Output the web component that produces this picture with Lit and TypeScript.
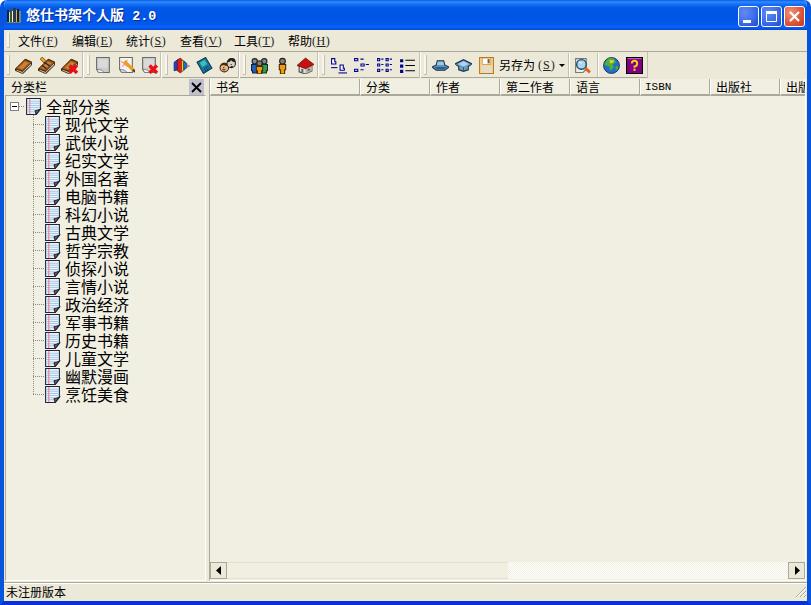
import { LitElement, html, css, svg } from 'lit';
import { customElement } from 'lit/decorators.js';

const redX = svg`<path d="M8 8l7 7M15 8l-7 7" stroke="#e8101a" stroke-width="3.200" fill="none"/>`;
const book = svg`
  <path d="M0 11 9 2q1-.5 2 0l5 2.500v3L8 15.500q-1 .5-2 0l-6-2.500z" fill="#4c2a0c"/>
  <path d="M1.200 10.800 9.300 3l5.700 2.200L7 12.800z" fill="#a8601c"/>
  <path d="M3.500 10 9.300 4.500l3.500 1.200L7 11.500z" fill="#c98236"/>
  <path d="M1.500 12l5.500 2.200 8-8v1.300l-8 7.500-5.500-2.200z" fill="#d8d8d0"/>`;
const page = svg`
  <path d="M1.500 .500h12v14h-10l-2-3z" fill="#c9cdca" stroke="#6a6a6a"/>
  <path d="M3 2h9v8H3z" fill="#d8dbd9"/>
  <path d="M1.500 11.500l5 1 2 2h-5z" fill="#fff" stroke="#6a6a6a" stroke-width=".7"/>`;
const hat = svg`
  <path d="M0 9.500l4-2 1-4h6l1 4 4 2-4 3H4z" fill="#5f94c0" stroke="#16304a"/>
  <path d="M5.500 4.500h5l1 3h-7z" fill="#a0c8e4"/>
  <path d="M2 9.500h12l-3 2H5z" fill="#2f5c84"/>`;

const ICONS: Record<string, unknown> = {
  book,
  bookEdit: svg`${book}
    <path d="M4 0l3.500 3.500-2 2L2 2z" fill="#f0a020" stroke="#704000" stroke-width=".7"/>
    <path d="M6 5l5 3.500M4 8l4 3" stroke="#222" stroke-width="1.200"/>`,
  bookDel: svg`${book}${redX}`,
  page,
  pageEdit: svg`
    <path d="M1.500 .500h12v14h-10l-2-3z" fill="#f6f2f0" stroke="#6a6a6a"/>
    <path d="M3 4l6 5M9 3L4 9" stroke="#f09090"/>
    <path d="M1.500 11.500l5 1 2 2h-5z" fill="#ddd" stroke="#6a6a6a" stroke-width=".7"/>
    <path d="M6 4l9 9" stroke="#e8a020" stroke-width="3"/>
    <path d="M14 12l2 2" stroke="#444" stroke-width="2"/>`,
  pageDel: svg`${page}${redX}`,
  colors: svg`
    <path d="M1 5l4-3v10l-4 1z" fill="#2048c8" stroke="#101848" stroke-width=".6"/>
    <path d="M4 3l3-2 2 2v10l-2 2-3-2z" fill="#e81818" stroke="#501010" stroke-width=".6"/>
    <path d="M8 3l3 1v8l-3 2z" fill="#f0d020" stroke="#504010" stroke-width=".6"/>
    <path d="M10 4l3 2v4l-3 2z" fill="#2070d8" stroke="#101848" stroke-width=".6"/>
    <path d="M13 7l3 1v1l-3 1z" fill="#999"/>`,
  pda: svg`
    <path d="M1 5l8-4.500 6 10-8 5z" fill="#1878a8" stroke="#0c3850"/>
    <path d="M3.500 5.500l4.500-3 2.500 4-4.500 3z" fill="#40c0a8"/>
    <path d="M7.500 11.500l4-2.500M8.500 13l4-2.500" stroke="#083048" stroke-dasharray="1 1"/>`,
  faces: svg`
    <circle cx="5" cy="10" r="4" fill="#e8b888" stroke="#402010"/>
    <path d="M1.500 8.500q1-4 4-3t3 3q-3 0-4-1z" fill="#4a2c14"/>
    <circle cx="11.500" cy="6" r="4" fill="#d8d0c4" stroke="#202020"/>
    <path d="M8 5q0-4 4-4t3.500 4q-3 0-4-2-1 2-3.500 2z" fill="#202020"/>
    <path d="M4 10h1M11 7h1M3 12h3M11 9h2" stroke="#402010"/>`,
  people: svg`
    <circle cx="3.500" cy="4" r="2.500" fill="#7a8ca0" stroke="#222"/>
    <path d="M0.500 7h6v6h-1v2h-4v-2h-1z" fill="#2060c0" stroke="#102040"/>
    <circle cx="12.500" cy="4" r="2.500" fill="#7a8ca0" stroke="#222"/>
    <path d="M9.500 7h6v6h-1v2h-4v-2h-1z" fill="#30a050" stroke="#103020"/>
    <circle cx="8" cy="6" r="2.500" fill="#8a8070" stroke="#222"/>
    <path d="M5 9h6v4l-1 0v3H6v-3l-1 0z" fill="#f09a10" stroke="#402800"/>`,
  person: svg`
    <circle cx="8" cy="4" r="2.700" fill="#8a8070" stroke="#222"/>
    <path d="M5 7h6v5h-1v4H6v-4H5z" fill="#f09a10" stroke="#402800"/>`,
  house: svg`
    <path d="M2 9v5l6 2 6-3V8L8 5z" fill="#e8e4dc" stroke="#444"/>
    <path d="M8 11v5l6-3V8z" fill="#b8b4ac"/>
    <path d="M0 8l8-7 8 6-8 4z" fill="#c81010" stroke="#601010" stroke-width=".7"/>
    <path d="M4 11h2v3H4zM10 11h2v2h-2z" fill="#666"/>`,
  large: svg`
    <path d="M1.500 1.500h3v3h1v2h-4z" fill="#fff" stroke="#000090"/>
    <path d="M1 10h6" stroke="#000090"/>
    <path d="M9.500 7.500h3v3h1v2h-4z" fill="#fff" stroke="#000090"/>
    <path d="M8 15h8" stroke="#000090"/>`,
  small: svg`
    <path d="M1.500 1.500h3v2h-3zM7 2h3M7.500 6.500h3v2h-3zM12 7h3M1.500 11.500h3v2h-3zM7 12h3" fill="#fff" stroke="#000090"/>`,
  list: svg`
    <path d="M1.500 1.500h2v2h-2zM5 2h2M9.500 1.500h2v2h-2zM13 2h2M1.500 6.500h2v2h-2zM5 7h2M9.500 6.500h2v2h-2zM13 7h2M1.500 11.500h2v2h-2zM5 12h2M9.500 11.500h2v2h-2zM13 12h2" fill="#fff" stroke="#000090"/>`,
  details: svg`
    <path d="M1 2h3v3H1zM1 7h3v3H1zM1 12h3v3H1z" fill="#000090"/>
    <path d="M6 3h9M6 8h9M6 13h9" stroke="#000"/>`,
  hat,
  hatUp: svg`<g transform="translate(0 -1)">
    <path d="M0 7.500l8-4 8 4-3.500 2.500v3L8 14.500 3.500 13v-3z" fill="#6a9cc4" stroke="#16304a"/>
    <path d="M3 7.500l5-2.500 5 2.500-5 2.500z" fill="#b0d4ec"/>
    <path d="M8 10.500v4" stroke="#2f5c84"/></g>`,
  save: svg`
    <path d="M1.500 .500h13v15h-13z" fill="#f8d898" stroke="#b87818"/>
    <path d="M4 1h8v6H4z" fill="#fff" stroke="#b87818" stroke-width=".6"/>
    <path d="M9 2h2v4H9z" fill="#806030"/>
    <path d="M3.500 9h9v6h-9z" fill="#e0dcd0"/>`,
  find: svg`
    <path d="M1.500 1.500h10v10l-3 3h-7z" fill="#ecece8" stroke="#777"/>
    <circle cx="7" cy="7" r="4.500" fill="#a8d8f0" stroke="#204868" stroke-width="1.300"/>
    <path d="M5 5l2 1" stroke="#fff"/>
    <path d="M10.500 10.500l4.500 4" stroke="#e86020" stroke-width="2.600"/>`,
  globe: svg`
    <circle cx="8" cy="8" r="7.500" fill="#2070c8" stroke="#102858" stroke-width=".8"/>
    <path d="M4 2q4-2 7 0l1 3-3 2 1 3-3 3-1-4-3-1-2-1z" fill="#50b030"/>
    <path d="M6 3l4 0 0 2-3 1z" fill="#e8d040"/>
    <path d="M12 9l2-1 0 3-2 2z" fill="#50b030"/>`,
  help: svg`
    <path d="M.5.500h15v15H.5z" fill="#800080" stroke="#000"/>
    <path d="M1.500 1.500h13" stroke="#c060c0"/>
    <path d="M5.500 6q0-2.500 2.500-2.500T10.500 6 8 9v1" fill="none" stroke="#f0d020" stroke-width="1.800"/>
    <path d="M7 11h2v2H7z" fill="#f0d020"/>`,
  note: svg`
    <path d="M1.500 .500h13v10l-4 5h-9z" fill="#eaf2f8" stroke="#24243a"/>
    <path d="M2 3h12M2 5h12M2 7h12M2 9h12M2 11h9M2 13h8" stroke="#a4cbea"/>
    <path d="M4.500 1v14" stroke="#f07a8a"/>
    <path d="M14.500 10.500l-5 1.500 1 3.500z" fill="#666" stroke="#24243a"/>`,
  shelf: svg`
    <path d="M1 3h2v12H1z" fill="#1c2430"/>
    <path d="M3 5h1v10H3z" fill="#d8d8b8"/>
    <path d="M4 2h2v13H4z" fill="#2a5a38"/>
    <path d="M6 4h1v11H6z" fill="#f0f0e8"/>
    <path d="M7 1h3v14H7z" fill="#303848"/>
    <path d="M10 3h1v12h-1z" fill="#c8b870"/>
    <path d="M11 2h2v13h-2z" fill="#1c2028"/>
    <path d="M13 4h2v11h-2z" fill="#7a8a70"/>
    <path d="M1 15h14v1H1z" fill="#8a7a50"/>`,
};

const icon = (name: string, size = 17) =>
  html`<svg class="ic" width=${size} height=${size} viewBox="0 0 16 16">${ICONS[name]}</svg>`;

const BANDS = [
  { width: 80, icons: ['book', 'bookEdit', 'bookDel'] },
  { width: 78, icons: ['page', 'pageEdit', 'pageDel'] },
  { width: 78, icons: ['colors', 'pda', 'faces'] },
  { width: 79, icons: ['people', 'person', 'house'] },
  { width: 102, icons: ['large', 'small', 'list', 'details'] },
];

const MENUS = [
  ['文件', 'F'],
  ['编辑', 'E'],
  ['统计', 'S'],
  ['查看', 'V'],
  ['工具', 'T'],
  ['帮助', 'H'],
];

const CATEGORIES = [
  '现代文学', '武侠小说', '纪实文学', '外国名著', '电脑书籍', '科幻小说', '古典文学', '哲学宗教',
  '侦探小说', '言情小说', '政治经济', '军事书籍', '历史书籍', '儿童文学', '幽默漫画', '烹饪美食',
];

const COLUMNS = [
  { label: '书名', width: 150 },
  { label: '分类', width: 70 },
  { label: '作者', width: 70 },
  { label: '第二作者', width: 70 },
  { label: '语言', width: 70 },
  { label: 'ISBN', width: 70 },
  { label: '出版社', width: 70 },
  { label: '出版日期', width: 70 },
];

@customElement('app-root')
export class AppRoot extends LitElement {
  static styles = css`
    :host {
      display: block;
      width: 811px;
      height: 605px;
      overflow: hidden;
      background: #fff;
      font-family: 'Noto Sans CJK SC', 'Liberation Sans', sans-serif;
      font-size: 12px;
      line-height: 16px;
      color: #000;
    }
    .ic { display: block; flex: none; }
    .window {
      height: 605px;
      box-sizing: border-box;
      display: flex;
      flex-direction: column;
      border-radius: 7px 7px 0 0;
      overflow: hidden;
      border-left: 4px solid #0855dd;
      border-right: 4px solid #0855dd;
      border-bottom: 4px solid #0831d9;
    }
    .titlebar {
      flex: none;
      height: 30px;
      margin: 0 -4px;
      display: flex;
      align-items: center;
      padding: 0 6px 0 6px;
      background: linear-gradient(180deg, #0a5be6 0, #2f8cff 2px, #1a70f4 4px, #0058e8 8px, #0055e5 16px, #0058ee 24px, #0a62f4 27px, #0048d8 30px);
    }
    .title {
      margin-left: 4px;
      flex: 1;
      color: #fff;
      font-size: 14px;
      font-weight: 700;
      white-space: pre;
      text-shadow: 1px 1px 0 #0a2a90;
    }
    .title b {
      margin-left: 5px;
      font-family: 'Liberation Mono', monospace;
      font-size: 13.4px;
    }
    .winbtns { display: flex; gap: 2px; margin-top: 3px; }
    .winbtn {
      width: 21px;
      height: 21px;
      box-sizing: border-box;
      border: 1px solid #fff;
      border-radius: 3px;
      background: radial-gradient(circle at 30% 30%, #5f8cf0 0, #3c6cea 55%, #2248c0 100%);
      display: flex;
      align-items: center;
      justify-content: center;
    }
    .winbtn.close {
      background: radial-gradient(circle at 30% 30%, #f09478 0, #e0573a 55%, #c03a1c 100%);
    }
    .client {
      flex: 1;
      min-height: 0;
      display: flex;
      flex-direction: column;
      background: #ece9d8;
    }
    .menubar {
      flex: none;
      height: 22px;
      box-sizing: border-box;
      border-bottom: 1px solid #aca899;
      display: flex;
      align-items: center;
      padding: 0 0 0 3px;
    }
    .gripper {
      flex: none;
      width: 3px;
      box-sizing: border-box;
      background: #f8f6ee;
      border-right: 1px solid #c4c0b0;
      border-bottom: 1px solid #c4c0b0;
    }
    .menubar .gripper { height: 15px; margin-right: 8px; }
    .menuitem {
      width: 40px;
      margin-right: 14px;
      white-space: nowrap;
      display: flex;
      align-items: center;
    }
    .hot {
      font-family: 'Liberation Serif', serif;
      font-size: 12px;
      letter-spacing: 0.5px;
      width: 16px;
      color: #222;
    }
    .hot u { text-decoration-thickness: 1px; }
    .toolbar {
      flex: none;
      height: 26px;
      display: flex;
      box-sizing: border-box;
    }
    .band {
      flex: none;
      box-sizing: border-box;
      display: flex;
      align-items: center;
      padding-left: 3px;
      border-right: 1px solid #fff;
      box-shadow: inset -1px 0 0 #c4c0b0, inset 0 -1px 0 #aca899;
    }
    .band .gripper { height: 20px; margin-right: 2px; }
    .band.last { border-right: none; }
    .tbtn {
      flex: none;
      width: 23px;
      height: 22px;
      display: flex;
      align-items: center;
      justify-content: center;
    }
    .saveas { margin-left: 1px; white-space: nowrap; display: flex; align-items: center; }
    .saveas .hot { margin-left: 3px; width: 18px; letter-spacing: 1px; }
    .caret {
      width: 0;
      height: 0;
      margin-left: 3px;
      border-left: 3px solid transparent;
      border-right: 3px solid transparent;
      border-top: 3px solid #000;
    }
    .vsep {
      flex: none;
      width: 1px;
      height: 24px;
      margin: 0 2px 0 3px;
      background: #c4c0b0;
      box-shadow: 1px 0 0 #fff;
    }
    .main {
      flex: 1;
      min-height: 0;
      display: flex;
      padding: 1px 1px 1px 0;
      border-bottom: 1px solid #aca899;
    }
    .panel {
      flex: none;
      width: 202px;
      display: flex;
      flex-direction: column;
    }
    .panel-head {
      flex: none;
      height: 16px;
      display: flex;
      align-items: center;
      padding-left: 7px;
    }
    .panel-head span { flex: 1; }
    .panel-close {
      flex: none;
      width: 15px;
      height: 16px;
      margin-right: 2px;
      background: #c1bfcd;
      display: flex;
      align-items: center;
      justify-content: center;
    }
    .tree {
      flex: 1;
      min-height: 0;
      margin-left: 1px;
      padding-top: 1px;
      background: #f1efe2;
      border-top: 1px solid #aca899;
      border-left: 1px solid #aca899;
      border-right: 1px solid #fff;
      border-bottom: 1px solid #fff;
      font-size: 16px;
      line-height: 18px;
      color: #000;
    }
    .row { height: 18px; display: flex; align-items: center; white-space: nowrap; }
    .expander {
      flex: none;
      width: 9px;
      height: 9px;
      box-sizing: border-box;
      margin-left: 4px;
      border: 1px solid #808080;
      background: #fff;
      display: flex;
      align-items: center;
      justify-content: center;
    }
    .expander i { display: block; width: 5px; height: 1px; background: #000; }
    .rootlink {
      flex: none;
      width: 6px;
      height: 1px;
      background: repeating-linear-gradient(to right, #8c8c7c 0 1px, transparent 1px 2px);
    }
    .rootlabel { margin-left: 4px; }
    .children { margin-left: 27px; }
    .stem {
      flex: none;
      width: 11px;
      align-self: stretch;
      background-image:
        repeating-linear-gradient(to bottom, #8c8c7c 0 1px, transparent 1px 2px),
        repeating-linear-gradient(to right, #8c8c7c 0 1px, transparent 1px 2px);
      background-repeat: no-repeat;
      background-size: 1px 100%, 100% 1px;
      background-position: 0 0, 0 9px;
    }
    .row:last-child .stem { background-size: 1px 10px, 100% 1px; }
    .childlabel { margin-left: 4px; }
    .splitter { flex: none; width: 3px; }
    .list {
      flex: 1;
      min-width: 0;
      display: flex;
      flex-direction: column;
      border-left: 1px solid #aca899;
      border-right: 1px solid #fff;
      border-bottom: 1px solid #fff;
      background: #f1efe2;
    }
    .listhead {
      flex: none;
      height: 17px;
      display: flex;
      overflow: hidden;
      background: #ece9d8;
    }
    .col {
      flex: none;
      box-sizing: border-box;
      height: 17px;
      line-height: 16px;
      padding-left: 5px;
      border-left: 1px solid #fff;
      border-right: 1px solid #aca899;
      border-bottom: 2px solid #aca899;
      background: #f1efe2;
      white-space: nowrap;
      overflow: hidden;
    }
    .col.mono { font-family: 'Liberation Mono', monospace; font-size: 11px; padding-left: 4px; }
    .listbody { flex: 1; min-height: 0; }
    .hscroll { flex: none; height: 17px; display: flex; margin: 0 0 1px 0; }
    .sbtn {
      flex: none;
      width: 17px;
      box-sizing: border-box;
      border: 1px solid #aca899;
      background: #ece9d8;
      display: flex;
      align-items: center;
      justify-content: center;
    }
    .thumb {
      flex: none;
      width: 281px;
      box-sizing: border-box;
      background: #f1efe2;
      border-top: 1px solid #e4e1d0;
      border-bottom: 1px solid #e4e1d0;
    }
    .track {
      flex: 1;
      background: repeating-conic-gradient(#fff 0 25%, #f1efe2 0 50%) 0 0 / 2px 2px;
    }
    .status {
      flex: none;
      height: 18px;
      display: flex;
      align-items: center;
      padding-left: 2px;
      box-shadow: inset 0 1px 0 #fff;
    }
    .status span { flex: 1; }
    .grip { display: block; flex: none; }
  `;

  private renderBand(band: { width: number; icons: string[] }) {
    return html`<div class="band" style="width:${band.width}px">
      <div class="gripper"></div>
      ${band.icons.map((name) => html`<div class="tbtn">${icon(name)}</div>`)}
    </div>`;
  }

  render() {
    return html`
      <div class="window">
        <div class="titlebar">
          ${icon('shelf', 16)}
          <div class="title">悠仕书架个人版 <b>2.0</b></div>
          <div class="winbtns">
            <div class="winbtn">
              <svg width="19" height="19" viewBox="0 0 19 19"><path d="M4 13h8v3H4z" fill="#fff"/></svg>
            </div>
            <div class="winbtn">
              <svg width="19" height="19" viewBox="0 0 19 19"><path d="M4.500 6.500h10v8h-10z" fill="none" stroke="#fff"/><path d="M4 4h11v3H4z" fill="#fff"/></svg>
            </div>
            <div class="winbtn close">
              <svg width="19" height="19" viewBox="0 0 19 19"><path d="M5 5l9 9M14 5l-9 9" stroke="#fff" stroke-width="2.200"/></svg>
            </div>
          </div>
        </div>
        <div class="client">
          <div class="menubar">
            <div class="gripper"></div>
            ${MENUS.map(
              ([label, key]) => html`<div class="menuitem">${label}<span class="hot">(<u>${key}</u>)</span></div>`
            )}
          </div>
          <div class="toolbar">
            ${BANDS.map((b) => this.renderBand(b))}
            <div class="band last" style="width:227px">
              <div class="gripper"></div>
              <div class="tbtn">${icon('hat')}</div>
              <div class="tbtn">${icon('hatUp')}</div>
              <div class="tbtn">${icon('save')}</div>
              <div class="saveas">另存为<span class="hot">(<u>S</u>)</span><i class="caret"></i></div>
              <div class="vsep"></div>
              <div class="tbtn">${icon('find')}</div>
              <div class="vsep"></div>
              <div class="tbtn">${icon('globe')}</div>
              <div class="tbtn">${icon('help')}</div>
            </div>
          </div>
          <div class="main">
            <div class="panel">
              <div class="panel-head">
                <span>分类栏</span>
                <div class="panel-close">
                  <svg width="11" height="11" viewBox="0 0 11 11"><path d="M1 1l9 9M10 1l-9 9" stroke="#000" stroke-width="1.800"/></svg>
                </div>
              </div>
              <div class="tree">
                <div class="row">
                  <div class="expander"><i></i></div>
                  <div class="rootlink"></div>
                  ${icon('note')}
                  <span class="rootlabel">全部分类</span>
                </div>
                <div class="children">
                  ${CATEGORIES.map(
                    (c) => html`<div class="row">
                      <div class="stem"></div>
                      ${icon('note')}
                      <span class="childlabel">${c}</span>
                    </div>`
                  )}
                </div>
              </div>
            </div>
            <div class="splitter"></div>
            <div class="list">
              <div class="listhead">
                ${COLUMNS.map(
                  (c) => html`<div class="col ${c.label === 'ISBN' ? 'mono' : ''}" style="width:${c.width}px">${c.label}</div>`
                )}
              </div>
              <div class="listbody"></div>
              <div class="hscroll">
                <div class="sbtn">
                  <svg width="8" height="9" viewBox="0 0 8 9"><path d="M6 0v9L1 4.500z" fill="#000"/></svg>
                </div>
                <div class="thumb"></div>
                <div class="track"></div>
                <div class="sbtn">
                  <svg width="8" height="9" viewBox="0 0 8 9"><path d="M2 0v9l5-4.500z" fill="#000"/></svg>
                </div>
              </div>
            </div>
          </div>
          <div class="status">
            <span>未注册版本</span>
            <svg class="grip" width="12" height="12" viewBox="0 0 12 12">
              <path d="M11 1L1 11M11 5l-6 6M11 9l-2 2" stroke="#aca899" fill="none"/>
              <path d="M11 2l-9 9M11 6l-5 5M11 10l-1 1" stroke="#fff" fill="none"/>
            </svg>
          </div>
        </div>
      </div>
    `;
  }
}
